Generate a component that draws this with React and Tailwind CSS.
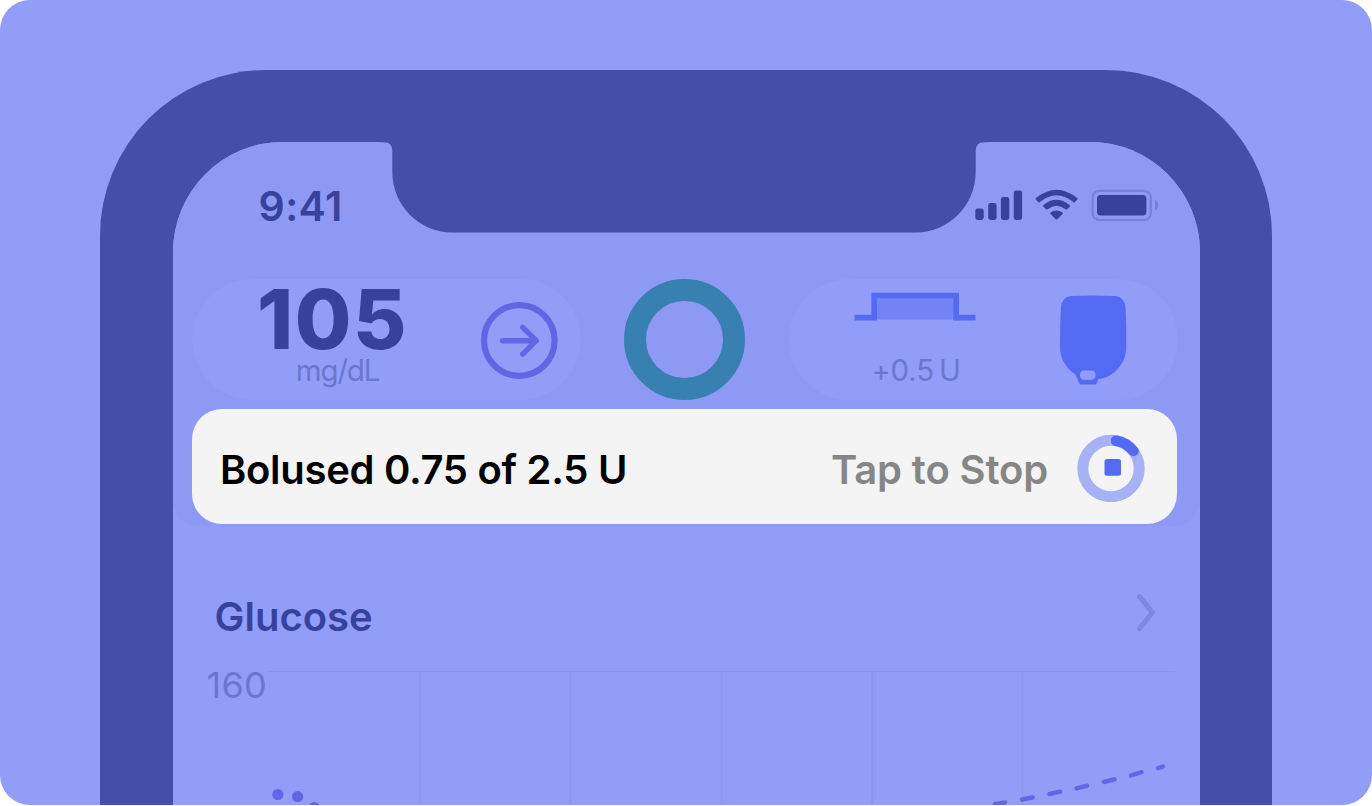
import React from "react";

function StatusIcons() {
  return (
    <svg className="block h-[34px] w-[186px]" viewBox="974 188 186 34">
      <g fill="#37429c">
        <rect x="975.3" y="208.6" width="8.4" height="11.4" rx="2.4" />
        <rect x="988.2" y="203" width="8.4" height="17" rx="2.4" />
        <rect x="1000.9" y="197" width="8.4" height="23" rx="2.4" />
        <rect x="1013.7" y="190.6" width="8.4" height="29.4" rx="2.4" />
        <path d="M1035.7 198.3 Q1056.5 181.2 1077.4 198.3 Q1077.9 199 1077.3 199.6 L1074.6 202.2 Q1073.9 202.7 1073.2 202.1 Q1056.5 188.6 1039.9 202.1 Q1039.2 202.7 1038.5 202.2 L1035.8 199.6 Q1035.2 199 1035.7 198.3Z" />
        <path d="M1043.3 205.3 Q1056.5 194.4 1069.8 205.3 Q1070.4 206 1069.8 206.7 L1067 209.3 Q1066.3 209.9 1065.5 209.3 Q1056.5 202 1047.6 209.3 Q1046.8 209.9 1046.1 209.3 L1043.3 206.7 Q1042.7 206 1043.3 205.3Z" />
        <path d="M1050.6 212.5 Q1056.5 208.5 1062.5 212.5 Q1063.3 213.2 1062.6 213.9 L1057.3 219.2 Q1056.5 219.9 1055.8 219.2 L1050.5 213.9 Q1049.8 213.2 1050.6 212.5Z" />
        <rect x="1097" y="195" width="49.4" height="20.6" rx="3.6" />
      </g>
      <rect x="1092.6" y="190.8" width="58.2" height="29.2" rx="6.6" fill="none" stroke="#7781d9" strokeWidth="2.2" />
      <path d="M1155 199.8 Q1158.2 201.5 1158.2 205.2 Q1158.2 208.9 1155 210.6Z" fill="#7781d9" />
    </svg>
  );
}

function Header() {
  return (
    <header className="flex h-[384px] flex-col rounded-tl-[110px] rounded-tr-[110px] rounded-b-[26px] bg-[#8d99f3] pr-[22px] pl-[19px]">
      <div className="flex h-[137px] items-start justify-between pt-[46px] pr-[18px] pl-[67px]">
        <span className="text-[41px] leading-9 font-semibold tracking-[0.4px] text-[#37429c]">9:41</span>
        <StatusIcons />
      </div>
      <div className="flex h-[121px] items-center justify-between">
        <div className="flex h-full w-[389px] items-center justify-between rounded-full bg-[#919df7] pr-[23px] pl-[65px]">
          <div className="flex h-full w-[152px] flex-col items-center">
            <span className="mt-[11px] text-[82px] leading-[60px] font-extrabold tracking-[1.6px] text-[#37429c]">105</span>
            <span className="mt-[3px] ml-[10px] text-[29.5px] leading-[34px] tracking-[-1.2px] text-[#6c76cf]">mg/dL</span>
          </div>
          <svg className="h-[78px] w-[78px]" viewBox="480 301 78 78" fill="none" stroke="#6167e4" strokeLinecap="round" strokeLinejoin="round">
            <circle cx="519.3" cy="340.5" r="35.3" strokeWidth="6.2" />
            <path d="M502.5 340.7H536M522.7 327.3L536.2 340.7L522.7 354.2" strokeWidth="5.4" />
          </svg>
        </div>
        <div className="h-[121px] w-[121px] rounded-full border-[22px] border-[#3980b2]" />
        <div className="flex h-full w-[389px] items-start justify-between rounded-full bg-[#919df7] pr-[51px] pl-[65px]">
          <div className="flex w-[122px] flex-col items-center pt-[13px]">
            <svg className="h-[30px] w-[122px]" viewBox="854 292 122 30">
              <path d="M874 295.5H956V319.5H874Z" fill="#7484f4" />
              <path d="M854.5 317.6H874.2V295.5H956.2V317.6H975.5" fill="none" stroke="#546af2" strokeWidth="5.6" />
            </svg>
            <span className="mt-[31px] ml-[3px] text-[29.5px] leading-[34px] tracking-[-0.2px] whitespace-nowrap text-[#6c76cf] [word-spacing:-3px]">+0.5 U</span>
          </div>
          <svg className="mt-[15px] h-[92px] w-[68px]" viewBox="1059 294 68 92">
            <path fillRule="evenodd" fill="#546af2" d="M1071 296Q1093 295 1115 296Q1124.500 297 1125.500 307Q1126.500 325 1126.200 349C1125.500 364 1113 378 1098.500 379L1096.700 383.200Q1096.200 384.400 1094.800 384.400H1081Q1079.700 384.400 1079.200 383.200L1075.500 374.500C1066 368 1060 359 1060 347Q1060 325 1061 307Q1062 297 1071 296ZM1083.500 370.500Q1080 370.700 1080 375Q1080 379.500 1083.500 379.700H1092Q1095.500 379.500 1095.500 375Q1095.500 370.700 1092 370.500Z" />
          </svg>
        </div>
      </div>
      <div className="mt-[9px] flex h-[115px] w-[985px] items-center self-center rounded-[30px] bg-[#f4f4f4] pr-[32px] pl-[28px]">
        <span className="mt-[6px] flex-1 text-[40px] font-semibold tracking-[-0.3px] text-black">Bolused 0.75 of 2.5 U</span>
        <span className="mt-[6px] mr-[29px] text-[40px] font-semibold tracking-[-0.15px] text-[#868686]">Tap to Stop</span>
        <svg className="mt-[3px] h-[68px] w-[68px]" viewBox="1077.500 434 68 68" fill="none">
          <circle cx="1111.500" cy="468.500" r="28.200" stroke="#a7b1f6" strokeWidth="11" />
          <path d="M1116.500 440.700A28.200 28.200 0 0 1 1134 451" stroke="#546af2" strokeWidth="10.500" strokeLinecap="round" />
          <rect x="1105" y="459" width="16.500" height="16.800" rx="2.500" fill="#546af2" />
        </svg>
      </div>
    </header>
  );
}

function GlucoseChart() {
  return (
    <section className="flex flex-1 flex-col pt-[65px]">
      <div className="flex h-[52px] items-center justify-between pr-[43px] pl-[42px]">
        <h2 className="text-[40px] leading-[52px] font-semibold text-[#37429c]">Glucose</h2>
        <svg className="-mt-[9px] h-[42px] w-[22px]" viewBox="1135 592 22 42" fill="none" stroke="#7e88e0" strokeWidth="5" strokeLinecap="round" strokeLinejoin="round">
          <path d="M1139.500 596.700L1152.500 612.500L1139.500 628.500" />
        </svg>
      </div>
      <div className="flex h-[142px] items-start pt-[24px] pl-[34px]">
        <span className="w-[61px] text-[36px] leading-[36px] tracking-[0.3px] text-[#6c76cf]">160</span>
        <svg className="h-[138px] w-[910px]" viewBox="268 667 910 138" fill="none">
          <path d="M268 671.500H1175" stroke="#8994ee" />
          <path d="M420 672V805M570.500 672V805M721.500 672V805M872 672V805M1022.500 672V805" stroke="#8c97f0" strokeWidth="1.600" />
          <g fill="#6167e4">
            <circle cx="277.800" cy="794.500" r="5.600" />
            <circle cx="297.700" cy="796.600" r="5.600" />
            <circle cx="314.500" cy="807.500" r="5.600" />
          </g>
          <path d="M995 804.200L1005 802.500M1022 799.500L1032.500 797.500M1049.500 794L1060 791.700M1076.500 788.300L1087 785.700M1104 782L1114.500 779.300M1131 775.500L1141.500 772.200M1158 768.200L1163 766.600" stroke="#6167e4" strokeWidth="4.400" strokeLinecap="round" />
        </svg>
      </div>
    </section>
  );
}

export default function App() {
  return (
    <div className="h-[806px] w-[1372px] overflow-hidden bg-white font-['Inter',sans-serif]">
      <main className="relative h-[804.600px] overflow-hidden rounded-[30px] bg-[#929df7] px-[100px] pt-[70px]">
        <div className="h-[900px] rounded-t-[166px] bg-[#444fa9] px-[72.500px] pt-[72px]">
          <div className="flex h-[900px] flex-col rounded-t-[110px] bg-[#929df7]">
            <Header />
            <GlucoseChart />
          </div>
        </div>
        <svg className="absolute top-[140px] left-[380px] h-[94px] w-[608px]" viewBox="380 140 608 94">
          <path fill="#444fa9" d="M380 140V142.300H384Q392.300 142.300 392.300 151V172C392.300 205 419 232.500 452 232.500H916C949 232.500 975.700 205 975.700 172V151Q975.700 142.300 984 142.300H988V140Z" />
        </svg>
      </main>
    </div>
  );
}
